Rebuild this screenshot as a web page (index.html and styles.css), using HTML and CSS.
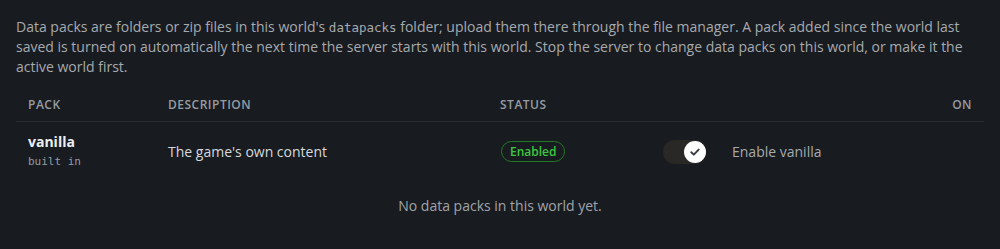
FILE: index.html
```html
<!DOCTYPE html>
<html lang="en">
<head>
<meta charset="utf-8">
<title>Data packs</title>
<link rel="stylesheet" href="styles.css">
</head>
<body>
<main class="panel">
  <p class="intro">Data packs are folders or zip files in this world's <code>datapacks</code> folder; upload them there through the file manager. A pack added since the world last saved is turned on automatically the next time the server starts with this world. Stop the server to change data packs on this world, or make it the active world first.</p>
  <table class="packs">
    <colgroup>
      <col class="c-pack"><col class="c-desc"><col class="c-status"><col class="c-on">
    </colgroup>
    <thead>
      <tr><th>Pack</th><th>Description</th><th>Status</th><th class="right">On</th></tr>
    </thead>
    <tbody>
      <tr>
        <td><div class="name">vanilla</div><div class="sub">built in</div></td>
        <td class="desc">The game's own content</td>
        <td><span class="badge">Enabled</span></td>
        <td>
          <label class="toggle-wrap">
            <span class="toggle"><span class="knob"><svg width="12" height="12" viewBox="0 0 12 12"><path d="M2.3 6.2 L4.8 8.6 L9.7 3.6" fill="none" stroke="#3a3f46" stroke-width="2" stroke-linecap="round" stroke-linejoin="round"/></svg></span></span>
            <span class="toggle-label">Enable vanilla</span>
          </label>
        </td>
      </tr>
    </tbody>
  </table>
  <div class="empty">No data packs in this world yet.</div>
</main>
</body>
</html>
```

FILE: styles.css
```css
html, body {
  margin: 0;
  padding: 0;
  background: #181b20;
}
body {
  font-family: "Open Sans", "Noto Sans", sans-serif;
  color: #a6aaae;
}
.panel {
  padding: 17px 16px 16px;
}
.intro {
  margin: 0 0 11px;
  font-size: 14px;
  line-height: 20px;
  color: #a6aaae;
}
.intro code {
  font-family: "DejaVu Sans Mono", "Liberation Mono", monospace;
  font-size: 12.5px;
  line-height: 1;
}
.packs {
  width: 100%;
  border-collapse: collapse;
  table-layout: fixed;
}
.c-pack { width: 140px; }
.c-desc { width: 332px; }
.c-status { width: 163px; }
.packs th {
  text-align: left;
  font-size: 12px;
  font-weight: 600;
  letter-spacing: 0.5px;
  text-transform: uppercase;
  color: #969ba0;
  line-height: 18px;
  padding: 8px 12px 7px;
  border-bottom: 1px solid #2a2e34;
}
.packs th.right { text-align: right; }
.packs td {
  padding: 10px 12px 8px;
  vertical-align: middle;
  line-height: 18px;
}
.name {
  font-size: 14px;
  font-weight: 700;
  line-height: 20px;
  color: #eceef0;
}
.sub {
  font-family: "DejaVu Sans Mono", "Liberation Mono", monospace;
  font-size: 11px;
  line-height: 18px;
  padding-top: 1px;
  color: #969ba0;
}
.desc {
  font-size: 14px;
  color: #d6d9dc;
}
.badge {
  display: inline-block;
  font-size: 12px;
  font-weight: 600;
  line-height: 17px;
  padding: 1px 8px;
  border: 1px solid #237a23;
  border-radius: 999px;
  color: #3cc83c;
  margin-left: 1px;
  vertical-align: middle;
}
.toggle-wrap {
  display: flex;
  align-items: center;
  gap: 26px;
}
.toggle {
  display: flex;
  justify-content: flex-end;
  align-items: center;
  width: 43px;
  height: 24px;
  border-radius: 12px;
  background: #2a2826;
}
.knob {
  display: flex;
  align-items: center;
  justify-content: center;
  width: 22px;
  height: 22px;
  border-radius: 50%;
  background: #ffffff;
}
.toggle-label {
  font-size: 14px;
  color: #a6aaae;
}
.empty {
  text-align: center;
  font-size: 14px;
  line-height: 21px;
  padding: 16px;
  color: #a0a4a8;
}
```
